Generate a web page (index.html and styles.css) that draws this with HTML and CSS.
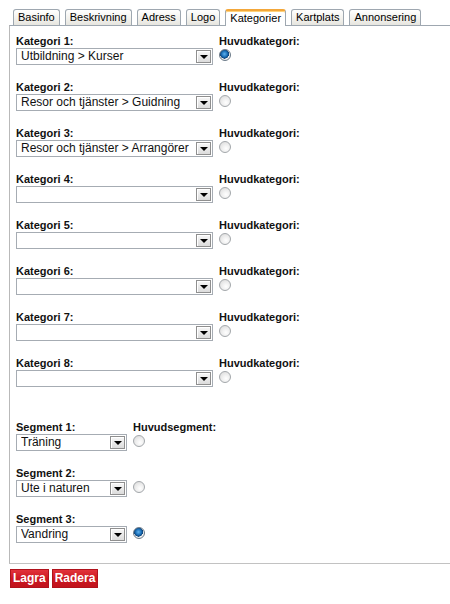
FILE: index.html
```html
<!DOCTYPE html>
<html>
<head>
<meta charset="utf-8">
<link rel="stylesheet" href="styles.css">
</head>
<body>
<div class="page">
  <div class="tabs">
    <div class="tab">Basinfo</div>
    <div class="tab">Beskrivning</div>
    <div class="tab">Adress</div>
    <div class="tab">Logo</div>
    <div class="tab active">Kategorier</div>
    <div class="tab">Kartplats</div>
    <div class="tab">Annonsering</div>
  </div>
  <div class="panel">
    <div class="row">
      <div class="col-main">
        <div class="label">Kategori 1:</div>
        <div class="select"><span class="value">Utbildning &gt; Kurser</span><span class="btn"><span class="arrow"></span></span></div>
      </div>
      <div class="col-side">
        <div class="label">Huvudkategori:</div>
        <div class="radio checked"></div>
      </div>
    </div>
    <div class="row">
      <div class="col-main">
        <div class="label">Kategori 2:</div>
        <div class="select"><span class="value">Resor och tjänster &gt; Guidning</span><span class="btn"><span class="arrow"></span></span></div>
      </div>
      <div class="col-side">
        <div class="label">Huvudkategori:</div>
        <div class="radio"></div>
      </div>
    </div>
    <div class="row">
      <div class="col-main">
        <div class="label">Kategori 3:</div>
        <div class="select"><span class="value">Resor och tjänster &gt; Arrangörer</span><span class="btn"><span class="arrow"></span></span></div>
      </div>
      <div class="col-side">
        <div class="label">Huvudkategori:</div>
        <div class="radio"></div>
      </div>
    </div>
    <div class="row">
      <div class="col-main">
        <div class="label">Kategori 4:</div>
        <div class="select"><span class="value"></span><span class="btn"><span class="arrow"></span></span></div>
      </div>
      <div class="col-side">
        <div class="label">Huvudkategori:</div>
        <div class="radio"></div>
      </div>
    </div>
    <div class="row">
      <div class="col-main">
        <div class="label">Kategori 5:</div>
        <div class="select"><span class="value"></span><span class="btn"><span class="arrow"></span></span></div>
      </div>
      <div class="col-side">
        <div class="label">Huvudkategori:</div>
        <div class="radio"></div>
      </div>
    </div>
    <div class="row">
      <div class="col-main">
        <div class="label">Kategori 6:</div>
        <div class="select"><span class="value"></span><span class="btn"><span class="arrow"></span></span></div>
      </div>
      <div class="col-side">
        <div class="label">Huvudkategori:</div>
        <div class="radio"></div>
      </div>
    </div>
    <div class="row">
      <div class="col-main">
        <div class="label">Kategori 7:</div>
        <div class="select"><span class="value"></span><span class="btn"><span class="arrow"></span></span></div>
      </div>
      <div class="col-side">
        <div class="label">Huvudkategori:</div>
        <div class="radio"></div>
      </div>
    </div>
    <div class="row">
      <div class="col-main">
        <div class="label">Kategori 8:</div>
        <div class="select"><span class="value"></span><span class="btn"><span class="arrow"></span></span></div>
      </div>
      <div class="col-side">
        <div class="label">Huvudkategori:</div>
        <div class="radio"></div>
      </div>
    </div>

    <div class="spacer"></div>

    <div class="row">
      <div class="col-main narrow">
        <div class="label">Segment 1:</div>
        <div class="select"><span class="value">Träning</span><span class="btn"><span class="arrow"></span></span></div>
      </div>
      <div class="col-side">
        <div class="label">Huvudsegment:</div>
        <div class="radio"></div>
      </div>
    </div>
    <div class="row">
      <div class="col-main narrow">
        <div class="label">Segment 2:</div>
        <div class="select"><span class="value">Ute i naturen</span><span class="btn"><span class="arrow"></span></span></div>
      </div>
      <div class="col-side">
        <div class="label empty"></div>
        <div class="radio"></div>
      </div>
    </div>
    <div class="row last">
      <div class="col-main narrow">
        <div class="label">Segment 3:</div>
        <div class="select"><span class="value">Vandring</span><span class="btn"><span class="arrow"></span></span></div>
      </div>
      <div class="col-side">
        <div class="label empty"></div>
        <div class="radio checked"></div>
      </div>
    </div>
  </div>
  <div class="actions">
    <button class="button">Lagra</button>
    <button class="button">Radera</button>
  </div>
</div>
</body>
</html>
```

FILE: styles.css
```css
html, body {
  margin: 0;
  padding: 0;
  background: #ffffff;
  overflow: hidden;
}

body {
  font-family: "Liberation Sans", Arial, sans-serif;
  color: #000;
}

.page {
  padding: 9px 0 0 9px;
}

.tabs {
  display: flex;
  align-items: flex-end;
  gap: 5px;
  padding-left: 4px;
  height: 16px;
  position: relative;
  z-index: 2;
}

.tab {
  box-sizing: border-box;
  height: 16px;
  padding: 0 4px;
  border: 1px solid #9ea7b0;
  border-bottom: none;
  border-radius: 3px 3px 0 0;
  background: linear-gradient(#ffffff, #f2f1ec 60%, #e6e5df);
  font-size: 11px;
  line-height: 15px;
  white-space: nowrap;
}

.tab.active {
  height: 17px;
  margin-bottom: -1px;
  background: #ffffff;
  border-top: 2px solid #f3a73a;
  box-shadow: inset 0 1px 0 #ffd27a;
  line-height: 15px;
}

.panel {
  border-top: 1px solid #9ea7b0;
  border-left: 1px solid #b9b9b9;
  border-bottom: 1px solid #c2c2c2;
  padding: 8px 0 5px 6px;
}

.row {
  display: flex;
  gap: 6px;
  margin-bottom: 15px;
}

.row.last {
  margin-bottom: 15px;
}

.col-main {
  width: 197px;
}

.col-main.narrow {
  width: 111px;
}

.label {
  font-size: 11px;
  font-weight: bold;
  line-height: 14px;
  color: #111;
  white-space: nowrap;
}

.label.empty {
  height: 14px;
}

.select {
  box-sizing: border-box;
  height: 17px;
  border: 1px solid #a6acb3;
  background: #fff;
  display: flex;
  align-items: center;
  padding-left: 4px;
}

.value {
  flex: 1;
  font-size: 12px;
  line-height: 15px;
  color: #111;
  white-space: nowrap;
  overflow: hidden;
}

.btn {
  box-sizing: border-box;
  width: 15px;
  height: 13px;
  margin-right: 1px;
  border: 1px solid #8f8f8f;
  background: linear-gradient(#f7f7f7, #dcdcdc);
  box-shadow: inset 1px 1px 0 #ffffff;
  display: flex;
  align-items: center;
  justify-content: center;
}

.arrow {
  width: 0;
  height: 0;
  border-left: 4px solid transparent;
  border-right: 4px solid transparent;
  border-top: 4px solid #000;
  margin-top: 1px;
}

.spacer {
  height: 18px;
}

.radio {
  box-sizing: border-box;
  width: 12px;
  height: 12px;
  margin-top: 1px;
  border-radius: 50%;
  border: 1px solid #a3a7ab;
  background: radial-gradient(circle at 60% 65%, #ffffff 0%, #f0f0f0 40%, #d6d6d6 100%);
}

.radio.checked {
  border-color: #6b7a88;
  background:
    radial-gradient(circle at 45% 40%, #5fb2ee 0%, #1b6fb8 35%, #0c3f73 55%, transparent 58%),
    radial-gradient(circle, #ffffff 0%, #e6e6e6 100%);
}

.actions {
  display: flex;
  gap: 3px;
  margin-top: 5px;
  padding-left: 1px;
}

.button {
  height: 19px;
  padding: 0 2px;
  margin: 0;
  border: 1px solid #b0121c;
  background: linear-gradient(#e2333b, #cc1822 50%, #c1131c);
  color: #ffffff;
  font-family: "Liberation Sans", Arial, sans-serif;
  font-size: 12px;
  font-weight: bold;
  line-height: 17px;
  cursor: pointer;
}
```
